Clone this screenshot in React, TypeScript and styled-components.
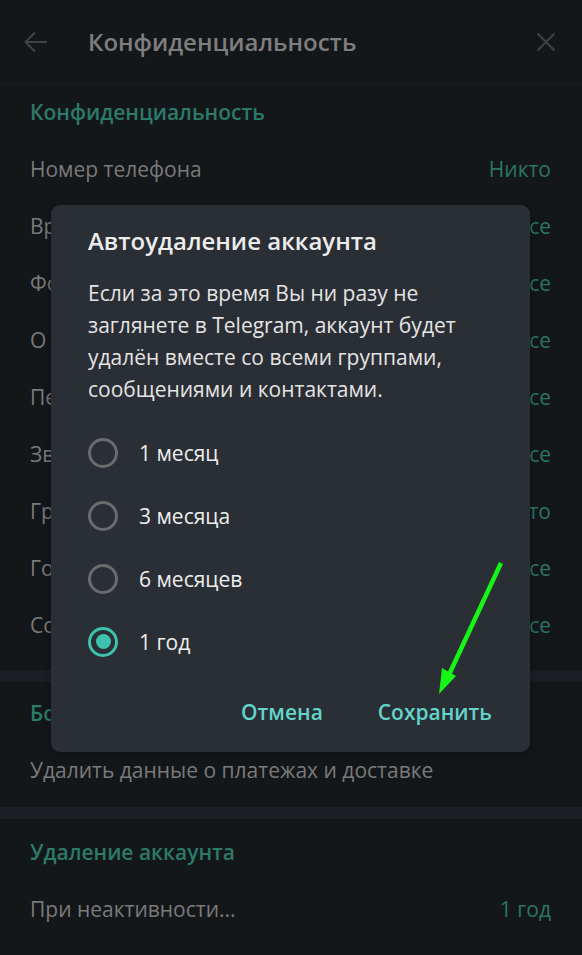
import styled, { createGlobalStyle } from 'styled-components';

const GlobalStyle = createGlobalStyle`
  html, body {
    margin: 0;
    padding: 0;
    background: #14171a;
  }
  body {
    font-family: "Open Sans", "Noto Sans", sans-serif;
    -webkit-font-smoothing: antialiased;
  }
`;

const privacyRows = [
  { label: 'Номер телефона', value: 'Никто' },
  { label: 'Время захода', value: 'Все' },
  { label: 'Фотографии профиля', value: 'Все' },
  { label: 'О себе', value: 'Все' },
  { label: 'Пересылка сообщений', value: 'Все' },
  { label: 'Звонки', value: 'Все' },
  { label: 'Группы и каналы', value: 'Никто' },
  { label: 'Голосовые сообщения', value: 'Все' },
  { label: 'Сообщения', value: 'Все' },
];

const periods = ['1 месяц', '3 месяца', '6 месяцев', '1 год'];

export default function App() {
  return (
    <>
      <GlobalStyle />
      <Page>
        <Header>
          <IconButton>
            <svg width="24" height="22" viewBox="0 0 24 22" fill="none">
              <path d="M23 11H2M11 1.5L1.5 11l9.5 9.5" stroke="#3f4347" strokeWidth="2" />
            </svg>
          </IconButton>
          <HeaderTitle>Конфиденциальность</HeaderTitle>
          <IconButton>
            <svg width="20" height="20" viewBox="0 0 20 20" fill="none">
              <path d="M1.5 1.5l17 17M18.5 1.5l-17 17" stroke="#3f4347" strokeWidth="2" />
            </svg>
          </IconButton>
        </Header>

        <Section $top={14} $bottom={17}>
          <SectionTitle>Конфиденциальность</SectionTitle>
          {privacyRows.map((r) => (
            <Row key={r.label}>
              <span>{r.label}</span>
              <RowValue>{r.value}</RowValue>
            </Row>
          ))}
        </Section>
        <Divider />
        <Section $top={18} $bottom={9}>
          <SectionTitle>Боты и сайты</SectionTitle>
          <Row>
            <span>Удалить данные о платежах и доставке</span>
          </Row>
        </Section>
        <Divider />
        <Section $top={20} $bottom={16}>
          <SectionTitle>Удаление аккаунта</SectionTitle>
          <Row>
            <span>При неактивности...</span>
            <RowValue>1 год</RowValue>
          </Row>
        </Section>

        <Dialog>
          <DialogTitle>Автоудаление аккаунта</DialogTitle>
          <DialogText>
            <Line>Если за это время Вы ни разу не</Line>
            <Line>заглянете в Telegram, аккаунт будет</Line>
            <Line>удалён вместе со всеми группами,</Line>
            <Line>сообщениями и контактами.</Line>
          </DialogText>
          <RadioList>
            {periods.map((p) => (
              <RadioRow key={p}>
                <Radio $checked={p === '1 год'} />
                {p}
              </RadioRow>
            ))}
          </RadioList>
          <Buttons>
            <DialogButton>Отмена</DialogButton>
            <DialogButton>Сохранить</DialogButton>
          </Buttons>
        </Dialog>

        <Pointer width="582" height="955" viewBox="0 0 582 955">
          <line x1="501" y1="563" x2="447" y2="679" stroke="#16f516" strokeWidth="4.5" />
          <polygon points="439,694 442,668 456,676" fill="#16f516" />
        </Pointer>
      </Page>
    </>
  );
}

const Page = styled.div`
  position: relative;
  width: 582px;
  min-height: 955px;
  background: #14171a;
  overflow: hidden;
`;

const Header = styled.header`
  display: flex;
  align-items: center;
  height: 85px;
  padding: 0 26px 0 24px;
  border-bottom: 1px solid #191c1f;
  box-sizing: border-box;
`;

const IconButton = styled.div`
  display: flex;
  align-items: center;
  justify-content: center;
  padding-bottom: 1px;
`;

const HeaderTitle = styled.h1`
  flex: 1;
  margin: 0 0 0 40px;
  font-size: 24px;
  font-weight: 600;
  color: #7e7e7e;
  line-height: 30px;
`;

const Section = styled.section<{ $top: number; $bottom: number }>`
  padding: ${(p) => p.$top}px 0 ${(p) => p.$bottom}px;
`;

const SectionTitle = styled.div`
  padding: 0 30px;
  height: 26px;
  line-height: 26px;
  margin-bottom: 15px;
  font-size: 21px;
  font-weight: 600;
  color: #2c7a68;
`;

const Row = styled.div`
  display: flex;
  align-items: center;
  justify-content: space-between;
  height: 57px;
  padding: 0 31px 0 30px;
  font-size: 21px;
  color: #7a7a7a;
`;

const RowValue = styled.span`
  color: #2a7664;
`;

const Divider = styled.div`
  height: 12px;
  background: #1b1f23;
`;

const Dialog = styled.div`
  position: absolute;
  left: 51px;
  top: 205px;
  width: 479px;
  height: 547px;
  box-sizing: border-box;
  padding: 22px 20px 20px 37px;
  background: #2a2e35;
  border-radius: 9px;
  box-shadow: 0 2px 10px rgba(0, 0, 0, 0.35);
  display: flex;
  flex-direction: column;
`;

const DialogTitle = styled.div`
  font-size: 24px;
  font-weight: 600;
  line-height: 28px;
  color: #ececec;
`;

const DialogText = styled.div`
  margin-top: 22px;
  font-size: 21px;
  line-height: 32px;
  color: #e4e4e4;
`;

const Line = styled.div`
  white-space: nowrap;
`;

const RadioList = styled.div`
  margin-top: 16px;
  display: flex;
  flex-direction: column;
`;

const RadioRow = styled.label`
  display: flex;
  align-items: center;
  gap: 21px;
  height: 63px;
  font-size: 21px;
  color: #eeeeee;
`;

const Radio = styled.span<{ $checked?: boolean }>`
  flex: none;
  width: 30px;
  height: 30px;
  box-sizing: border-box;
  border-radius: 50%;
  border: 3px solid ${(p) => (p.$checked ? '#3cc2ad' : '#6a6b6d')};
  display: flex;
  align-items: center;
  justify-content: center;
  &::after {
    content: '';
    width: 15px;
    height: 15px;
    border-radius: 50%;
    background: ${(p) => (p.$checked ? '#3cc2ad' : 'transparent')};
  }
`;

const Buttons = styled.div`
  margin-top: auto;
  display: flex;
  justify-content: flex-end;
  gap: 19px;
`;

const DialogButton = styled.button`
  border: 0;
  background: none;
  padding: 6px 18px;
  font-family: inherit;
  font-size: 21px;
  font-weight: 600;
  line-height: 28px;
  color: #62d4c9;
`;

const Pointer = styled.svg`
  position: absolute;
  left: 0;
  top: 0;
  pointer-events: none;
`;
